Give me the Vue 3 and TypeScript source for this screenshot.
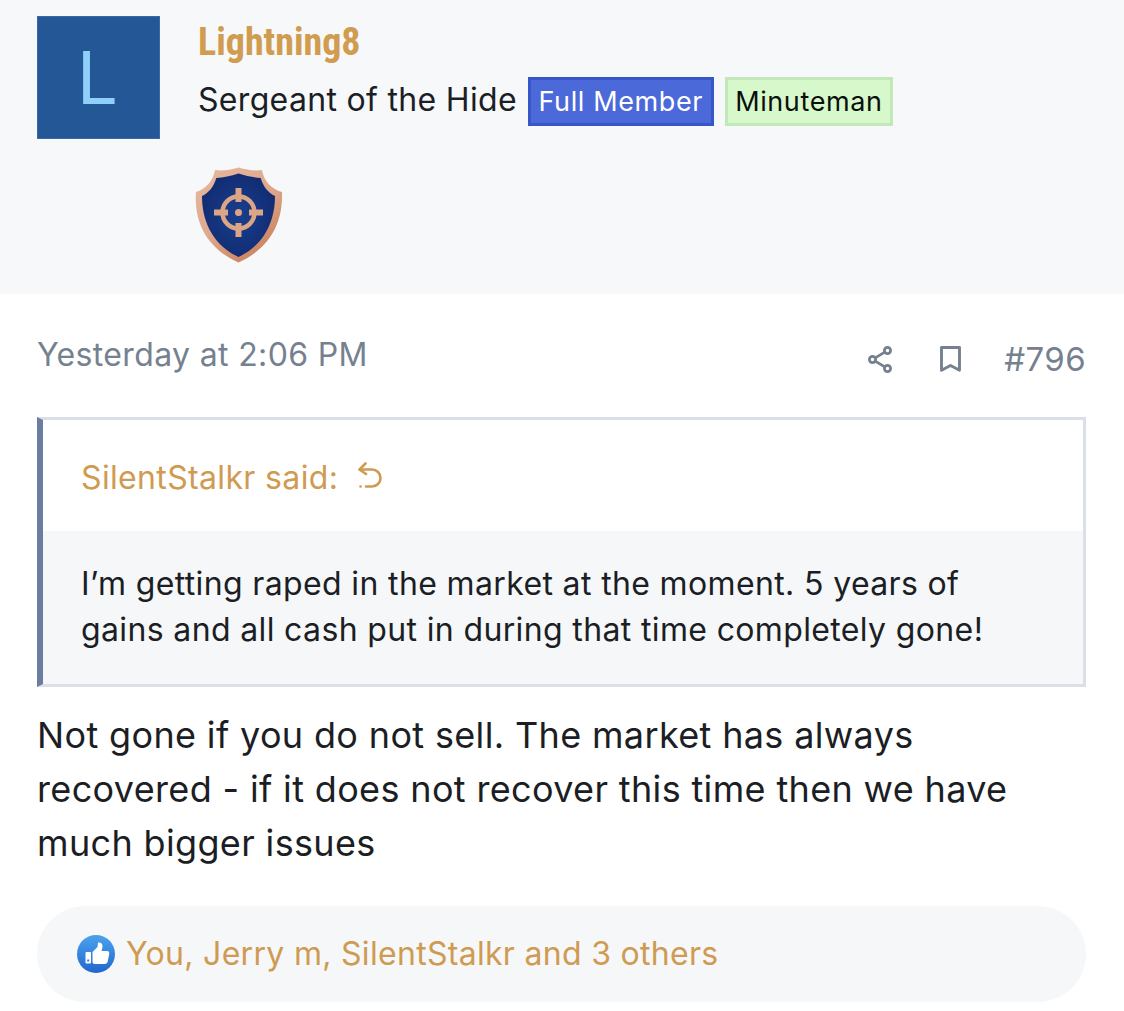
<script setup lang="ts">
const banners = [
  { label: "Full Member", kind: "member" },
  { label: "Minuteman", kind: "minute" },
];
</script>

<template>
  <div class="post">
    <header class="user">
      <div class="avatar">L</div>
      <div class="details">
        <div class="name">Lightning8</div>
        <div class="title-row">
          <span class="title">Sergeant of the Hide</span>
          <span v-for="b in banners" :key="b.label" class="banner" :class="b.kind">{{ b.label }}</span>
        </div>
        <svg class="shield" viewBox="0 0 88 96" width="88" height="96">
          <defs>
            <linearGradient id="rim" x1="0" y1="0" x2="0.7" y2="1">
              <stop offset="0" stop-color="#e6b9a0" />
              <stop offset="0.55" stop-color="#dfa98d" />
              <stop offset="1" stop-color="#c9805c" />
            </linearGradient>
            <radialGradient id="fill" cx="0.5" cy="0.5" r="0.6">
              <stop offset="0" stop-color="#1a3f8e" />
              <stop offset="1" stop-color="#10296f" />
            </radialGradient>
          </defs>
          <path d="M43.500 .5C52 3 60 4 67 3C69 14 76 22 87 25C88 52 78 80 43.500 95.500C9 80-1 52 1 25C11 22 18 14 20 3C27 4 35 3 43.500 .5Z" fill="url(#rim)" />
          <path d="M43.500 6.500C51 9 59 10.500 65.700 11C68 19 73 26 80 29C80 52 71 77 43.500 90C16 77 7 52 7 29C14 26 19 19 21.300 11C28 10.500 36 9 43.500 6.500Z" fill="url(#fill)" />
          <g fill="none" stroke="#dca586">
            <circle cx="43.500" cy="45.500" r="16" stroke-width="4.500" />
            <path stroke-width="6" d="M43.500 21V35M43.500 56V70M19 45.500H33M54 45.500H68" />
          </g>
          <circle cx="43.500" cy="45.500" r="3.500" fill="#dca586" />
        </svg>
      </div>
    </header>

    <main class="body">
      <div class="meta">
        <span class="time">Yesterday at 2:06 PM</span>
        <div class="actions">
          <svg class="share" viewBox="0 0 24 27" width="24" height="27" fill="none" stroke="#76818f" stroke-width="2.800">
            <circle cx="19.500" cy="4.500" r="3.100" />
            <circle cx="4.500" cy="13.500" r="3.100" />
            <circle cx="19.500" cy="22.500" r="3.100" />
            <path d="M7.200 11.900 16.800 6.100M7.200 15.100l9.600 5.800" />
          </svg>
          <svg class="mark" viewBox="0 0 21 26" width="21" height="26" fill="none" stroke="#76818f" stroke-width="2.900" stroke-linejoin="round">
            <path d="M1.500 1.500H19.500V24.300L10.500 19.500 1.500 24.300Z" />
          </svg>
          <span class="num">#796</span>
        </div>
      </div>

      <blockquote class="quote">
        <div class="quote-head">
          <span>SilentStalkr said:</span>
          <svg viewBox="0 0 24 27" width="24" height="27" fill="none" stroke="#cf9b52" stroke-width="2.600" stroke-linecap="round" stroke-linejoin="round">
            <path d="M7.500 1.500 1.500 7.500 8 12" />
            <path d="M2 7.500H14a8.500 8.500 0 0 1 0 17H8" />
            <path d="M2.500 24.500h.1" />
          </svg>
        </div>
        <div class="quote-text">I’m getting raped in the market at the moment. 5 years of gains and all cash put in during that time completely gone!</div>
      </blockquote>

      <p class="message">Not gone if you do not sell. The market has always recovered - if it does not recover this time then we have much bigger issues</p>

      <div class="likes">
        <svg viewBox="0 0 38 38" width="38" height="38">
          <defs>
            <linearGradient id="like" x1="0" y1="0" x2="0" y2="1">
              <stop offset="0" stop-color="#4aa3ec" />
              <stop offset="1" stop-color="#2167cf" />
            </linearGradient>
          </defs>
          <circle cx="19" cy="19" r="19" fill="url(#like)" />
          <rect x="8.500" y="17" width="5.500" height="11.500" rx="1" fill="#fff" />
          <rect x="10.200" y="24.500" width="2" height="2" fill="#2f7bd8" />
          <path d="M15.500 17 20.500 12 21 7.500c2.800-.5 4.500 1 4.500 3.500 0 1.500-.5 3.500-1 5h5.500c2 0 2.500 1.500 2.200 3l-1.500 7.500c-.3 1.500-1.200 2.500-3 2.500H18.500c-1.500 0-3-.5-3-2Z" fill="#fff" />
        </svg>
        <span class="like-names">You, Jerry m, SilentStalkr and 3 others</span>
      </div>
    </main>
  </div>
</template>

<style>
html,
body {
  background: #fff;
}
</style>

<style scoped>
.post {
  width: 1124px;
  height: 1011px;
  overflow: hidden;
  font-family: Inter, "Liberation Sans", sans-serif;
  color: #1b1e24;
  background: #fff;
}
.user {
  display: flex;
  gap: 38px;
  height: 294px;
  padding: 16px 37px 0;
  box-sizing: border-box;
  background: #f7f8fa;
}
.avatar {
  width: 123px;
  height: 123px;
  box-sizing: border-box;
  padding-right: 2px;
  background: #245795;
  box-shadow: inset 0 0 0 1px #3a6aa3;
  color: #8fd0fb;
  font-size: 73px;
  line-height: 123px;
  text-align: center;
  flex: none;
}
.details {
  display: flex;
  flex-direction: column;
  align-items: flex-start;
}
.name {
  margin-top: 4px;
  font-family: Roboto, sans-serif;
  font-weight: 700;
  font-size: 38px;
  line-height: 44px;
  font-stretch: 75%;
  color: #d09c50;
}
.title-row {
  display: flex;
  align-items: center;
  gap: 11px;
  margin-top: 13px;
  font-size: 32px;
  letter-spacing: 0.32px;
}
.title {
  margin-top: -4px;
}
.banner {
  font-size: 27px;
  letter-spacing: 0.62px;
  line-height: 43px;
  height: 49px;
  padding: 0 7.500px;
  box-sizing: border-box;
  border: 3px solid;
}
.member {
  background: #4b69d9;
  border-color: #3756c8;
  color: #fff;
}
.minute {
  background: #d6f8cb;
  border-color: #c2e8ba;
  color: #0b0f0b;
}
.shield {
  margin: 41px 0 0 -3px;
}
.body {
  padding: 0 38px 0 37px;
}
.meta {
  display: flex;
  justify-content: space-between;
  align-items: center;
  height: 123px;
  color: #76818f;
}
.time {
  font-size: 32px;
  letter-spacing: 0.35px;
  margin-top: -3px;
}
.actions {
  display: flex;
  align-items: center;
  margin-top: 7px;
  font-size: 33px;
  letter-spacing: 0.4px;
}
.share {
  display: block;
  margin-right: 48px;
}
.mark {
  display: block;
  margin-right: 43px;
}
.quote {
  margin: 0;
  border: 3px solid #dbdfe8;
  border-left: 6px solid #6b7d9e;
}
.quote-head {
  display: flex;
  align-items: center;
  gap: 20px;
  height: 111px;
  padding-left: 38px;
  font-size: 32px;
  letter-spacing: 0.35px;
  color: #cf9b52;
}
.quote-head span {
  margin-top: 4px;
}
.quote-text {
  background: #f6f7f9;
  padding: 30px 80px 31px 38px;
  font-size: 32px;
  letter-spacing: 0.36px;
  line-height: 46px;
}
.message {
  margin: 21px 0 0;
  font-size: 36px;
  letter-spacing: 0.35px;
  line-height: 54px;
}
.likes {
  display: flex;
  align-items: center;
  gap: 11px;
  height: 96px;
  margin-top: 36px;
  padding-left: 40px;
  border-radius: 48px;
  background: #f6f7f9;
  font-size: 32px;
  letter-spacing: 0.3px;
  color: #cf9b52;
}
.like-names {
  margin-top: -2px;
}
</style>
